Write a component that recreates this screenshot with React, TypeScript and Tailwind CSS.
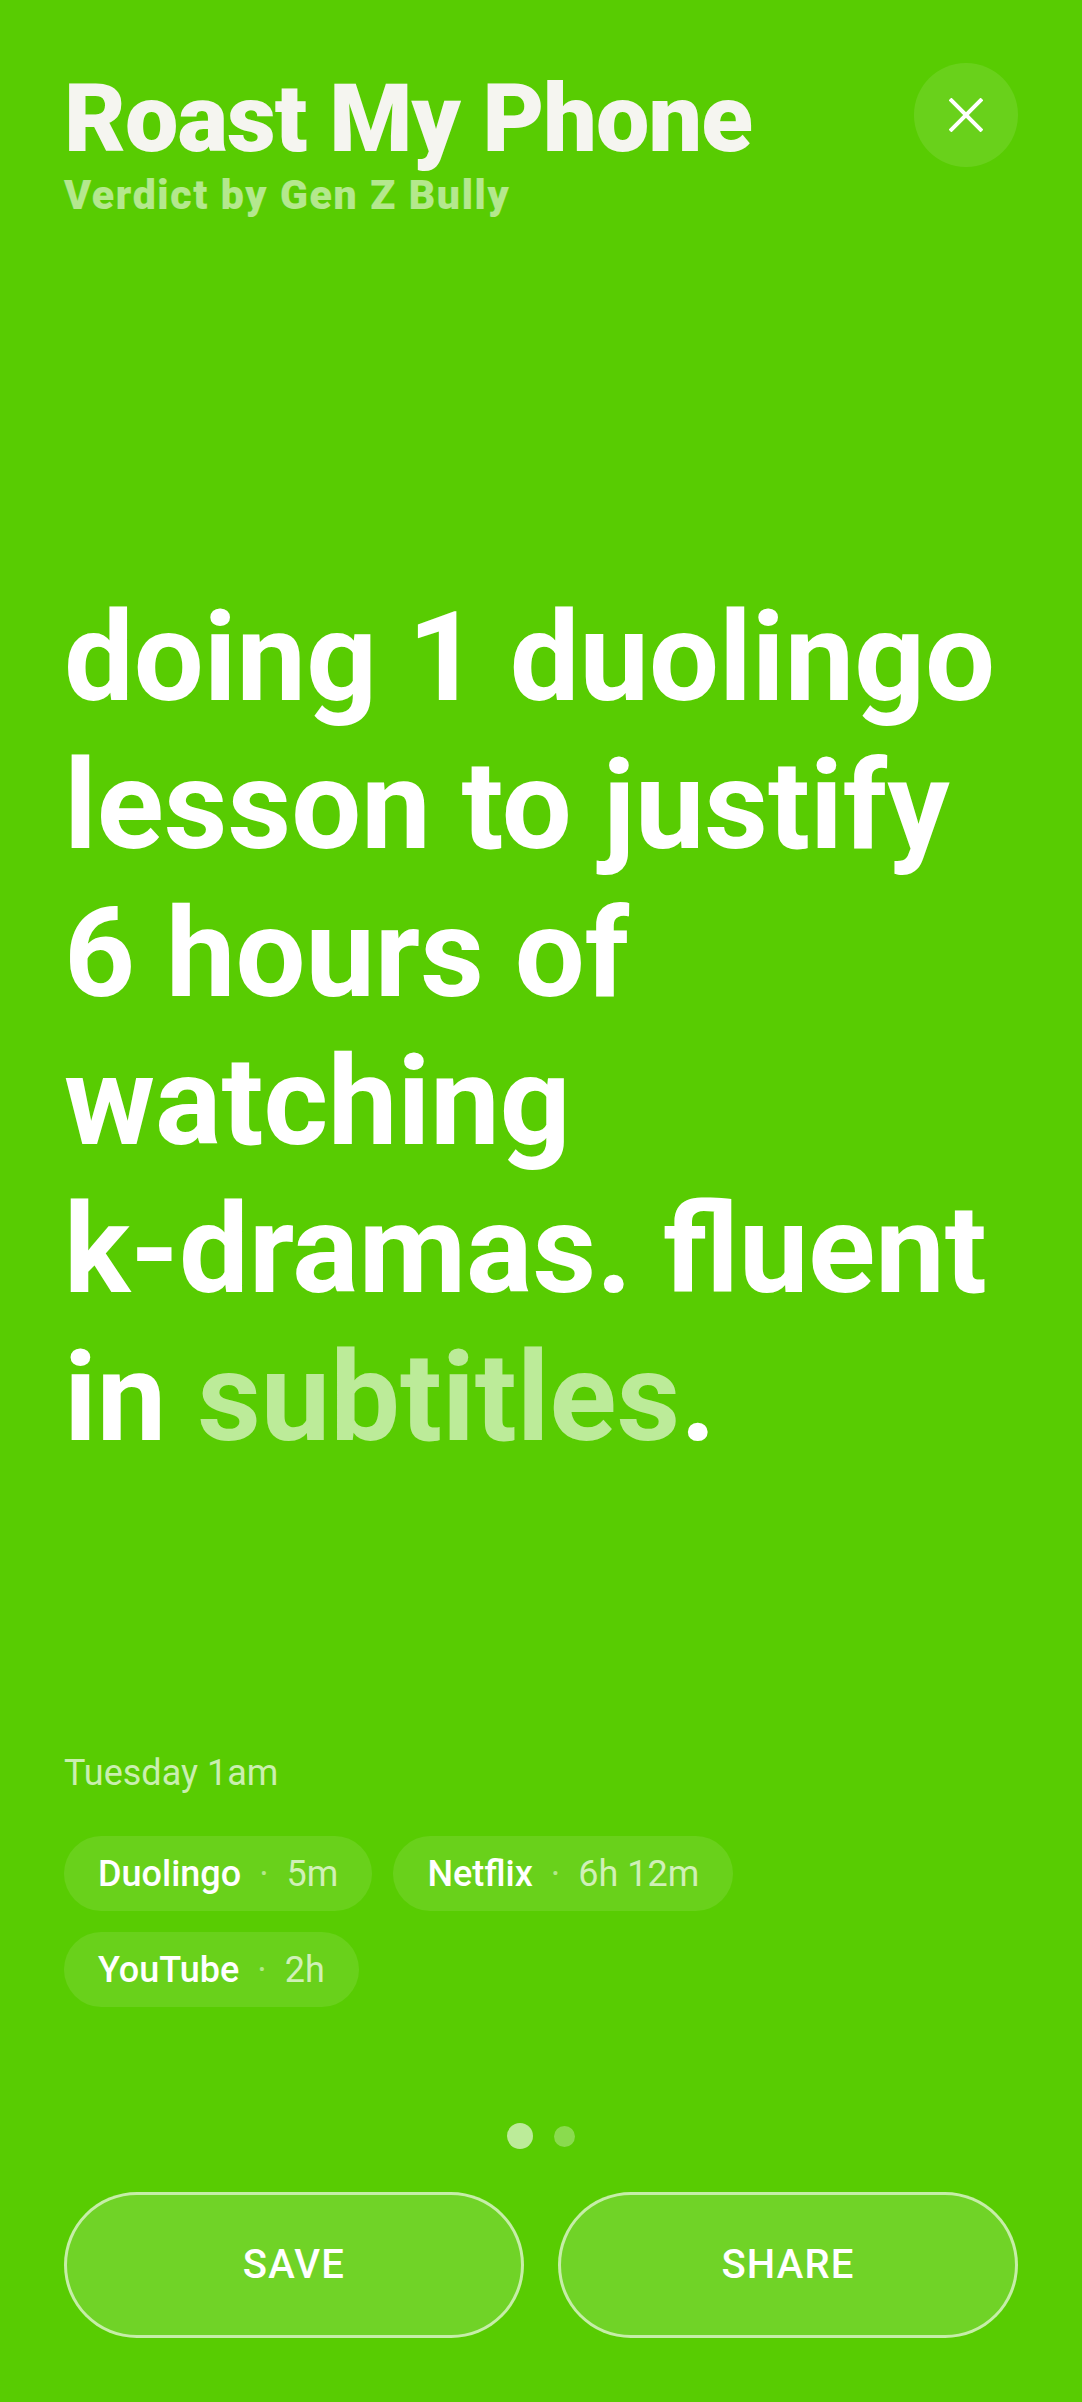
const chips = [
  [
    { app: "Duolingo", time: "5m" },
    { app: "Netflix", time: "6h 12m" },
  ],
  [{ app: "YouTube", time: "2h" }],
];

function Chip({ app, time }: { app: string; time: string }) {
  return (
    <div className="flex h-[75px] items-center gap-[18px] rounded-full bg-white/10 px-[34px] text-[36px] leading-none">
      <span className="font-medium text-white">{app}</span>
      <span className="text-white/50">·</span>
      <span className="text-white/70">{time}</span>
    </div>
  );
}

export default function App() {
  return (
    <div className="flex h-[2402px] w-full flex-col bg-[#58cc02] px-16 pb-[63px] font-['Roboto','Liberation_Sans',sans-serif] text-white">
      <header className="flex items-start justify-between pt-[63px]">
        <div className="pt-[8px]">
          <h1 className="text-[95px] font-black leading-[95px] tracking-[-0.01em] text-[#f5f5f0]">Roast My Phone</h1>
          <p className="mt-[9px] text-[41px] font-black leading-[41px] tracking-[0.04em] text-white/55">
            Verdict by Gen Z Bully
          </p>
        </div>
        <button className="flex h-[104px] w-[104px] items-center justify-center rounded-full bg-white/10">
          <svg width="34" height="34" viewBox="0 0 34 34" fill="none" stroke="white" strokeWidth="4">
            <line x1="1" y1="1" x2="33" y2="33" />
            <line x1="33" y1="1" x2="1" y2="33" />
          </svg>
        </button>
      </header>

      <p className="mt-[368px] text-[124px] font-bold leading-[148px]">
        doing 1 duolingo lesson to justify 6 hours of watching{" "}
        <span className="whitespace-nowrap">k-dramas.</span> fluent in{" "}
        <span className="text-white/60">subtitles</span>.
      </p>

      <div className="mt-[283px] text-[36px] leading-none text-white/70">Tuesday 1am</div>

      <div className="mt-[45px] flex flex-col gap-[21px]">
        {chips.map((row, i) => (
          <div key={i} className="flex gap-[21px]">
            {row.map((c) => (
              <Chip key={c.app} app={c.app} time={c.time} />
            ))}
          </div>
        ))}
      </div>

      <div className="mt-[116px] flex h-[26px] items-center justify-center gap-[21px]">
        <span className="h-[26px] w-[26px] rounded-full bg-white/60" />
        <span className="h-[21px] w-[21px] rounded-full bg-white/30" />
      </div>

      <div className="mt-[43px] grid grid-cols-2 gap-[34px]">
        <button className="h-[146px] rounded-full border-[3px] border-white/60 bg-white/15 text-[40px] font-medium tracking-[0.03em] text-white">
          SAVE
        </button>
        <button className="h-[146px] rounded-full border-[3px] border-white/60 bg-white/15 text-[40px] font-medium tracking-[0.03em] text-white">
          SHARE
        </button>
      </div>
    </div>
  );
}
